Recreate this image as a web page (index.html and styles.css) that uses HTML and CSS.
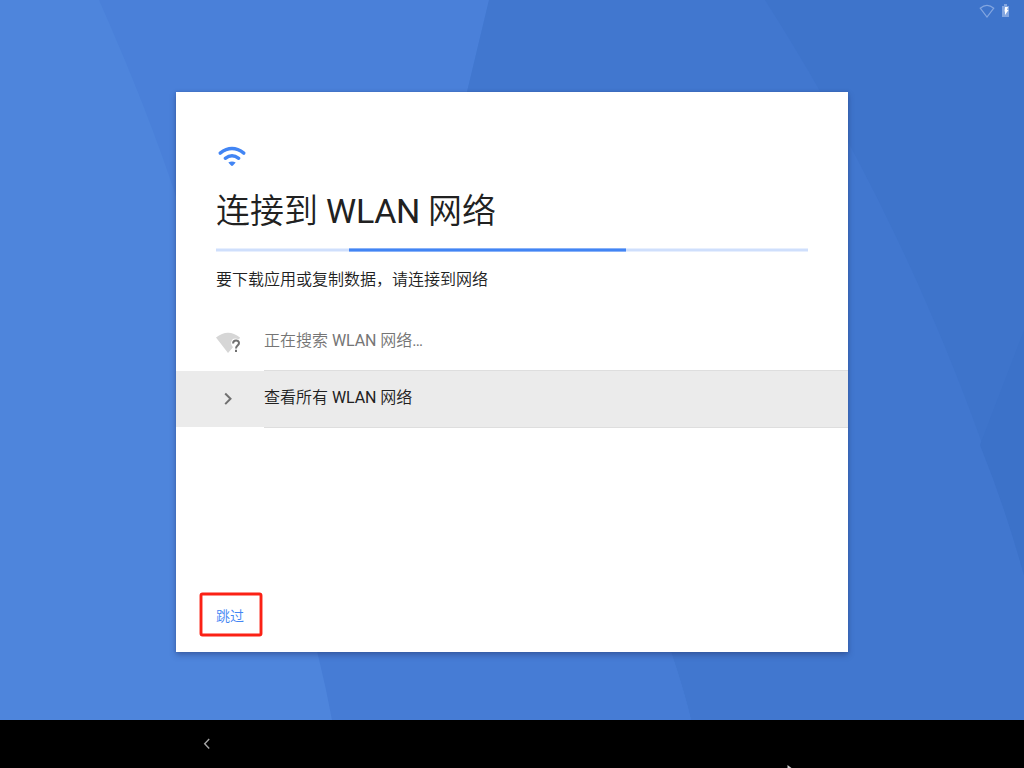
FILE: index.html
```html
<!DOCTYPE html>
<html lang="zh-CN">
<head>
<meta charset="utf-8">
<title>连接到 WLAN 网络</title>
<link rel="stylesheet" href="styles.css">
</head>
<body>
<div class="screen">
  <svg class="wallpaper" viewBox="0 0 1024 720" aria-hidden="true">
    <rect width="1024" height="720" fill="#4e85dc"/>
    <path d="M99 0C128 66 151 122 174 190C215 330 260 390 300 400L440 210L489 0Z" fill="#4a80d9"/>
    <path d="M489 0L467 92L400 380L300 590Q320 655 332 720H691Q684 690 671 652L640 400L767 0Z" fill="#467cd5"/>
    <path d="M489 0L467 92L560 400L671 652Q684 690 691 720H1024V0Z" fill="#4177cf"/>
    <path d="M765 0C848 130 955 330 1024 575V0Z" fill="#3e74cb"/>
    <path d="M1024 330L980 445Q1006 510 1024 575Z" fill="#3c72c9"/>
  </svg>
  <header class="status">
    <svg class="status-wifi" width="16" height="16" viewBox="0 0 16 16"><path d="M1.2 4.2Q8-1.500 14.800 4.200L8 13Z"/></svg>
    <svg class="status-battery" width="7" height="13" viewBox="0 0 7 13"><path class="battery-body" d="M2 0H5V2H7V13H0V2H2Z"/><path class="bolt" d="M3 3H6L5 6H6.500L3 11V7.500H2.500Z"/></svg>
  </header>
  <main class="card">
    <svg class="wifi" width="32" height="32" viewBox="0 0 32 32"><path d="M4.200 13.200Q16 4 27.800 13.200M9.300 18.300Q16 13.200 22.700 18.300" /><path class="wifi-dot" d="M12.300 22.500Q16 20.500 19.700 22.500L17.200 25.300Q16 26.700 14.800 25.300Z"/></svg>
    <h1 class="title">连接到<span class="latin"> WLAN </span>网络</h1>
    <div class="progress"><div class="progress-bar"></div></div>
    <p class="description">要下载应用或复制数据，请连接到网络</p>
    <ul class="list">
      <li class="row">
        <span class="row-icon"><svg width="26" height="24" viewBox="0 0 26 24"><path d="M0 7.500Q12-2.100 24 7.500L23 9.500Q16 6.500 15 13Q15.200 15.500 17 17.300L12 23Z" fill="#d6d6d6"/><path d="M17.100 13.500C17.100 9.600 23 9.700 23 13C23 15.500 20 15.500 20 18.400" fill="none" stroke="#707070" stroke-width="2"/><path d="M19 19.800h2v2.200h-2z" fill="#707070"/></svg></span>
        <span class="row-text searching">正在搜索<span class="latin"> WLAN </span>网络<span class="latin">…</span></span>
      </li>
      <li class="row selected">
        <span class="row-icon"><svg width="24" height="24" viewBox="0 0 24 24"><path d="M9.200 6.500L14.500 11.800L9.200 17.100" fill="none" stroke="#707070" stroke-width="2"/></svg></span>
        <span class="row-text">查看所有<span class="latin"> WLAN </span>网络</span>
      </li>
    </ul>
    <footer class="actions">
      <button class="skip">跳过<svg class="highlight" width="66" height="46" viewBox="0 0 66 46"><rect x="3" y="3" width="60" height="41" rx="1.500" fill="none" stroke="#fb2115" stroke-width="2.900"/></svg></button>
    </footer>
  </main>
  <nav class="navbar">
    <svg class="back" width="8" height="12" viewBox="0 0 8 12"><path d="M6.200 1L1.700 5.700L6.200 10.500" fill="none" stroke="#a5a5a5" stroke-width="1.400"/></svg>
    <svg class="cursor" width="5" height="3" viewBox="0 0 5 3"><path d="M0.500 0L4.500 3H0.500Z" fill="#ccc"/></svg>
  </nav>
</div>
</body>
</html>
```

FILE: styles.css
```css
* { box-sizing: border-box; }
body {
  margin: 0;
  font-family: Roboto, "Noto Sans CJK SC", sans-serif;
  font-weight: 350;
  color: #212121;
}
.screen {
  position: relative;
  width: 1024px;
  height: 768px;
  overflow: hidden;
  display: flex;
  flex-direction: column;
  align-items: center;
  background: #4e85dc;
}
.wallpaper {
  position: absolute;
  left: 0;
  top: 0;
  width: 1024px;
  height: 720px;
}
.status {
  position: relative;
  width: 100%;
  height: 92px;
  padding: 4px 15px 0 0;
  display: flex;
  justify-content: flex-end;
  align-items: flex-start;
  gap: 7px;
}
.status-wifi { fill: none; stroke: #83a6e0; stroke-width: 1.2; }
.battery-body { fill: #83a6e0; }
.bolt { fill: #fff; }
.card {
  position: relative;
  width: 672px;
  height: 560px;
  display: flex;
  flex-direction: column;
  background: #fff;
  box-shadow: 0 3px 6px rgba(30, 40, 90, .36), 0 0 3px rgba(30, 40, 90, .2);
}
.wifi {
  margin: 48px 0 0 40px;
  fill: none;
  stroke: #4285f4;
  stroke-width: 3.4;
  stroke-linecap: round;
}
.wifi .wifi-dot { fill: #4285f4; stroke: none; }
.latin { font-weight: 400; }
.title {
  margin: 14px 40px 0;
  height: 50px;
  font-size: 34px;
  line-height: 50px;
  font-weight: 350;
  white-space: nowrap;
}
.title .latin { letter-spacing: -0.35px; }
.progress {
  margin: 12px 40px 0;
  height: 4px;
  background: linear-gradient(#e7effe 1px, #cfdffc 1px 3px, #e7effe 3px);
}
.progress-bar {
  width: 277.4px;
  height: 4px;
  margin-left: 133px;
  background: linear-gradient(#89b2f8 1px, #4285f4 1px 3px, #89b2f8 3px);
}
.description {
  margin: 16px 40px 0;
  height: 24px;
  font-size: 16px;
  line-height: 24px;
}
.list {
  margin: 22px 0 0;
  padding: 0;
  list-style: none;
}
.row {
  height: 57px;
  padding-left: 40px;
  display: flex;
}
.selected { background: linear-gradient(#ebebeb, #ebebeb) 0 0 / 100% 56px no-repeat; }
.row-icon {
  width: 48px;
  height: 56px;
  display: flex;
  align-items: center;
}
.row-text {
  flex: 1;
  border-bottom: 1px solid #dedede;
  font-size: 16px;
  line-height: 54px;
}
.row-text .latin { letter-spacing: -0.1px; }
.searching { color: #757575; }
.actions {
  margin-top: auto;
  padding: 0 0 15px 22px;
  display: flex;
}
.skip {
  position: relative;
  width: 66px;
  height: 46px;
  padding: 3px 2px 0 0;
  border: 0;
  background: transparent;
  color: #4285f4;
  font: 350 14px/45px Roboto, "Noto Sans CJK SC", sans-serif;
  text-align: center;
}
.highlight {
  position: absolute;
  left: 0;
  top: 0;
}
.navbar {
  position: relative;
  width: 100%;
  height: 48px;
  margin-top: auto;
  padding: 0 232px 0 203px;
  display: flex;
  justify-content: space-between;
  align-items: center;
  background: #000;
}
.cursor { align-self: flex-end; }
```
